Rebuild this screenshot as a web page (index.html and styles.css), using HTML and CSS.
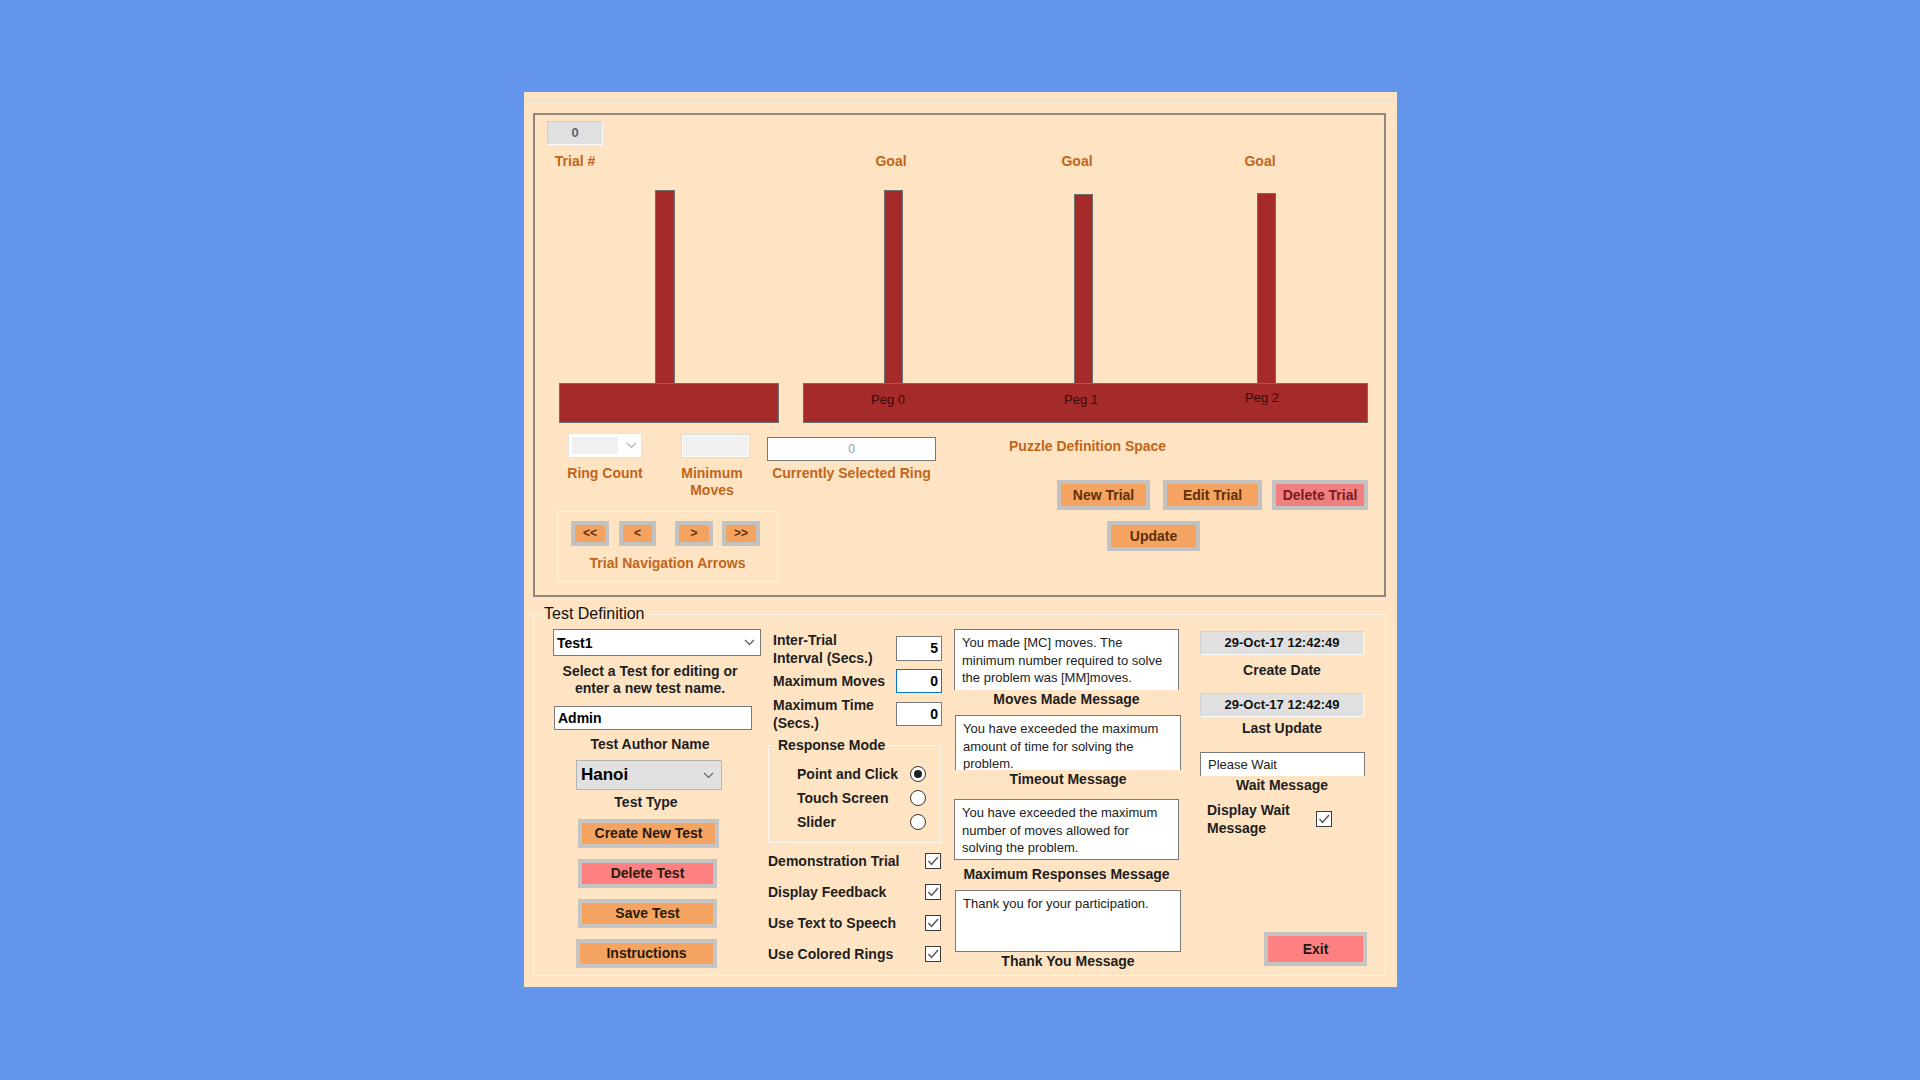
FILE: index.html
```html
<!DOCTYPE html>
<html>
<head>
<meta charset="utf-8">
<title>Test Definition</title>
<link rel="stylesheet" href="styles.css">
</head>
<body>
<div class="window">
  <div class="topline"></div>
  <div class="puzzle">
    <div class="trial-box">0</div>
    <div class="label-row">
      <span class="plabel first">Trial #</span>
      <span class="plabel g1">Goal</span>
      <span class="plabel g2">Goal</span>
      <span class="plabel g3">Goal</span>
    </div>
    <div class="stage">
      <div class="unit unit-left">
        <div class="poles"><div class="pole p0"></div></div>
        <div class="base"></div>
      </div>
      <div class="unit unit-right">
        <div class="poles"><div class="pole p1"></div><div class="pole p2"></div><div class="pole p3"></div></div>
        <div class="base base-right"><span class="peg l1">Peg 0</span><span class="peg l2">Peg 1</span><span class="peg l3">Peg 2</span></div>
      </div>
    </div>
    <div class="lower">
      <div class="lower-left">
        <div class="ctrl-row">
          <div class="ctrl ctrl-a">
            <div class="slot">
              <div class="combo-dis"><span class="dis-inner"></span><svg class="chev" width="11" height="7" viewBox="0 0 11 7"><polyline points="1,1 5.5,5.5 10,1" fill="none" stroke="#b4b4b4" stroke-width="1.2"/></svg></div>
            </div>
            <div class="clabel">Ring Count</div>
          </div>
          <div class="ctrl ctrl-b">
            <div class="slot"><div class="mini-box"></div></div>
            <div class="clabel">Minimum<br>Moves</div>
          </div>
          <div class="ctrl ctrl-c">
            <div class="slot"><div class="sel-box">0</div></div>
            <div class="clabel">Currently Selected Ring</div>
          </div>
        </div>
        <div class="navbox">
          <div class="navrow">
            <div class="navbtn n1">&lt;&lt;</div>
            <div class="navbtn n2">&lt;</div>
            <div class="navbtn n3">&gt;</div>
            <div class="navbtn n4">&gt;&gt;</div>
          </div>
          <div class="navlabel">Trial Navigation Arrows</div>
        </div>
      </div>
      <div class="lower-right">
        <div class="pds">Puzzle Definition Space</div>
        <div class="btnrow">
          <div class="btn b-new">New Trial</div>
          <div class="btn b-edit">Edit Trial</div>
          <div class="btn b-del">Delete Trial</div>
        </div>
        <div class="btn b-upd">Update</div>
      </div>
    </div>
  </div>

  <fieldset class="testdef">
    <legend class="td-legend">Test Definition</legend>
    <div class="td-body">
      <div class="col1">
        <div class="combo"><span>Test1</span><svg width="11" height="7" viewBox="0 0 11 7"><polyline points="1,1 5.5,5.5 10,1" fill="none" stroke="#555" stroke-width="1.2"/></svg></div>
        <div class="lab desc">Select a Test for editing or<br>enter a new test name.</div>
        <div class="admin">Admin</div>
        <div class="lab author-lab">Test Author Name</div>
        <div class="hanoi"><span>Hanoi</span><svg width="11" height="7" viewBox="0 0 11 7"><polyline points="1,1 5.5,5.5 10,1" fill="none" stroke="#666" stroke-width="1.2"/></svg></div>
        <div class="lab type-lab">Test Type</div>
        <div class="tbtn t-create">Create New Test</div>
        <div class="tbtn t-delete">Delete Test</div>
        <div class="tbtn t-save">Save Test</div>
        <div class="tbtn t-instr">Instructions</div>
      </div>

      <div class="col2">
        <div class="frow r1"><div class="flabel">Inter-Trial<br>Interval (Secs.)</div><div class="num">5</div></div>
        <div class="frow r2"><div class="flabel">Maximum Moves</div><div class="num focus">0</div></div>
        <div class="frow r3"><div class="flabel">Maximum Time<br>(Secs.)</div><div class="num">0</div></div>
        <fieldset class="resp">
          <legend class="resp-legend">Response Mode</legend>
          <div class="resp-body">
            <div class="radio-row"><span>Point and Click</span><span class="radio on"></span></div>
            <div class="radio-row"><span>Touch Screen</span><span class="radio"></span></div>
            <div class="radio-row"><span>Slider</span><span class="radio"></span></div>
          </div>
        </fieldset>
        <div class="chk-list">
          <div class="chk-row"><span>Demonstration Trial</span><span class="cb"><svg width="14" height="14" viewBox="0 0 14 14"><polyline points="2.5,7 5.5,10.5 12,3" fill="none" stroke="#555" stroke-width="1.4"/></svg></span></div>
          <div class="chk-row"><span>Display Feedback</span><span class="cb"><svg width="14" height="14" viewBox="0 0 14 14"><polyline points="2.5,7 5.5,10.5 12,3" fill="none" stroke="#555" stroke-width="1.4"/></svg></span></div>
          <div class="chk-row"><span>Use Text to Speech</span><span class="cb"><svg width="14" height="14" viewBox="0 0 14 14"><polyline points="2.5,7 5.5,10.5 12,3" fill="none" stroke="#555" stroke-width="1.4"/></svg></span></div>
          <div class="chk-row"><span>Use Colored Rings</span><span class="cb"><svg width="14" height="14" viewBox="0 0 14 14"><polyline points="2.5,7 5.5,10.5 12,3" fill="none" stroke="#555" stroke-width="1.4"/></svg></span></div>
        </div>
      </div>

      <div class="col3">
        <div class="msg m1 open">You made [MC] moves. The<br>minimum number required to solve<br>the problem was [MM]moves.</div>
        <div class="lab mlab l-moves">Moves Made Message</div>
        <div class="msg m2 open">You have exceeded the maximum<br>amount of time for solving the<br>problem.</div>
        <div class="lab mlab l-time">Timeout Message</div>
        <div class="msg m3">You have exceeded the maximum<br>number of moves allowed for<br>solving the problem.</div>
        <div class="lab mlab l-max">Maximum Responses Message</div>
        <div class="msg m4">Thank you for your participation.</div>
        <div class="lab mlab l-thanks">Thank You Message</div>
      </div>

      <div class="col4">
        <div class="date d1">29-Oct-17 12:42:49</div>
        <div class="lab dlab dl1">Create Date</div>
        <div class="date d2">29-Oct-17 12:42:49</div>
        <div class="lab dlab dl2">Last Update</div>
        <div class="waitbox">Please Wait</div>
        <div class="lab dlab dl3">Wait Message</div>
        <div class="waitrow">
          <div class="lab waitlab">Display Wait<br>Message</div>
          <span class="cb wcb"><svg width="14" height="14" viewBox="0 0 14 14"><polyline points="2.5,7 5.5,10.5 12,3" fill="none" stroke="#555" stroke-width="1.4"/></svg></span>
        </div>
        <div class="exit">Exit</div>
      </div>
    </div>
  </fieldset>
</div>
</body>
</html>
```

FILE: styles.css
```css
* { box-sizing: border-box; }

body {
  margin: 0;
  width: 1920px;
  height: 1080px;
  background: #6495ed;
  font-family: "Liberation Sans", Arial, sans-serif;
  overflow: hidden;
}

.window {
  margin: 92px 0 0 524px;
  width: 873px;
  height: 895px;
  background: #ffe4c4;
  display: flex;
  flex-direction: column;
}

.topline {
  margin-top: 8px;
  height: 0;
  border-top: 1px solid #e1ddd5;
}

/* ---------- puzzle area ---------- */
.puzzle {
  margin: 12px 0 0 9px;
  width: 853px;
  height: 484px;
  border: 2px solid #8d8780;
}

.trial-box {
  margin: 6px 0 0 12px;
  width: 56px;
  height: 24px;
  background: #e0e0e0;
  border: 1px solid;
  border-color: #cdcdcd #fbfbfb #fbfbfb #cdcdcd;
  font-weight: bold;
  font-size: 13px;
  line-height: 22px;
  text-align: center;
  color: #5f6372;
}

.label-row {
  display: flex;
  margin-top: 8px;
  height: 16px;
}

.plabel {
  width: 60px;
  text-align: center;
  font-weight: bold;
  font-size: 14px;
  line-height: 16px;
  color: #c0661a;
  white-space: nowrap;
}
.plabel.first { margin-left: 10px; }
.plabel.g1 { margin-left: 256px; }
.plabel.g2 { margin-left: 126px; }
.plabel.g3 { margin-left: 123px; }

.stage {
  display: flex;
  margin-top: 21px;
  padding-left: 24px;
}

.unit { display: flex; flex-direction: column; }
.unit-left { width: 220px; }
.unit-right { width: 565px; margin-left: 24px; }

.poles {
  display: flex;
  align-items: flex-end;
  height: 193px;
}

.pole {
  width: 20px;
  background: #a52a2a;
  border: 1px solid #6f6f6f;
  border-bottom: none;
}
.p0 { margin-left: 96px; height: 193px; }
.p1 { margin-left: 81px; height: 193px; width: 19px; }
.p2 { margin-left: 171px; height: 189px; width: 19px; }
.p3 { margin-left: 164px; height: 190px; width: 19px; }

.base {
  height: 40px;
  background: #a52a2a;
  border: 1px solid #6f6f6f;
}

.base-right {
  display: flex;
  padding-top: 8px;
}

.peg {
  width: 60px;
  text-align: center;
  font-size: 13px;
  line-height: 16px;
  color: #3a0c0c;
}
.l1 { margin-left: 54px; }
.l2 { margin-left: 133px; }
.l3 { margin-left: 121px; margin-top: -2px; }

.lower { display: flex; }
.lower-left { width: 402px; }

.ctrl-row { display: flex; align-items: flex-start; }

.ctrl {
  display: flex;
  flex-direction: column;
  align-items: center;
}
.ctrl-a { margin-left: 31px; width: 78px; }
.ctrl-b { margin-left: 28px; width: 80px; }
.ctrl-c { margin-left: 15px; width: 169px; }

.slot {
  height: 42px;
  width: 100%;
  display: flex;
  justify-content: center;
  align-items: flex-start;
}

.combo-dis {
  margin-top: 10px;
  width: 74px;
  height: 25px;
  background: #fff;
  border: 1px solid #e4e4e4;
  display: flex;
  align-items: center;
  padding: 0 4px 0 3px;
  justify-content: space-between;
}
.dis-inner {
  width: 46px;
  height: 17px;
  background: #f0f0f0;
}

.mini-box {
  margin: 11px 0 0 7px;
  width: 69px;
  height: 24px;
  background: #f0f0f0;
  border: 1px solid #dadada;
  box-shadow: inset 0 0 0 1px #fff;
}

.sel-box {
  margin-top: 14px;
  width: 169px;
  height: 24px;
  background: #fff;
  border: 1px solid #7a7a7a;
  font-size: 12px;
  line-height: 22px;
  text-align: center;
  color: #8f9aa6;
}

.clabel {
  font-weight: bold;
  font-size: 14px;
  line-height: 17px;
  color: #c0661a;
  text-align: center;
  white-space: nowrap;
}

.navbox {
  margin: 12px 0 0 22px;
  width: 221px;
  height: 71px;
  border: 1px solid #fbf2e8;
  display: flex;
  flex-direction: column;
  align-items: center;
  padding-top: 9px;
}

.navrow {
  display: flex;
  align-self: flex-start;
  padding-left: 13px;
}

.navbtn {
  height: 25px;
  width: 38px;
  border: 4px solid #c2c2c2;
  background: #f4a460;
  font-weight: bold;
  font-size: 12px;
  line-height: 17px;
  text-align: center;
  color: #5e300c;
}
.n2 { margin-left: 10px; width: 37px; }
.n3 { margin-left: 19px; }
.n4 { margin-left: 9px; }

.navlabel {
  margin-top: 9px;
  font-weight: bold;
  font-size: 14px;
  line-height: 17px;
  color: #c0661a;
  white-space: nowrap;
}

.lower-right {
  margin-left: 72px;
  display: flex;
  flex-direction: column;
}

.pds {
  margin-top: 15px;
  font-weight: bold;
  font-size: 14px;
  line-height: 17px;
  color: #c0661a;
  white-space: nowrap;
}

.btnrow {
  display: flex;
  margin: 25px 0 0 48px;
}

.btn {
  height: 30px;
  border: 4px solid #c2c2c2;
  background: #f4a460;
  font-weight: bold;
  font-size: 14px;
  line-height: 22px;
  text-align: center;
  color: #5e300c;
  white-space: nowrap;
}
.b-new { width: 93px; }
.b-edit { width: 99px; margin-left: 13px; }
.b-del { width: 96px; margin-left: 10px; background: #f08080; color: #7a1a22; }
.b-upd { width: 93px; margin: 11px 0 0 98px; }

/* ---------- test definition ---------- */
.testdef {
  margin: 8px 0 0 9px;
  width: 853px;
  height: 371px;
  border: 1px solid #fbf4ec;
  padding: 0;
  min-width: 0;
}

.td-legend {
  margin-left: 8px;
  padding: 0 2px;
  font-size: 16px;
  line-height: 18px;
  color: #111;
}

.td-body {
  display: flex;
  align-items: flex-start;
  padding: 6px 0 0 19px;
}

.lab {
  font-weight: bold;
  font-size: 14px;
  line-height: 17px;
  color: #1e1e1e;
  text-align: center;
  white-space: nowrap;
}

.col1 {
  width: 208px;
  display: flex;
  flex-direction: column;
}

.combo {
  width: 208px;
  height: 27px;
  background: #fff;
  border: 1px solid #7a7a7a;
  display: flex;
  align-items: center;
  justify-content: space-between;
  padding: 0 5px 0 3px;
  font-weight: bold;
  font-size: 14px;
  color: #000;
}

.desc { width: 194px; margin-top: 7px; }

.admin {
  margin: 9px 0 0 1px;
  width: 198px;
  height: 24px;
  background: #fff;
  border: 1px solid #7a7a7a;
  padding-left: 3px;
  font-weight: bold;
  font-size: 14px;
  line-height: 22px;
  color: #000;
}

.author-lab { width: 194px; margin-top: 6px; }

.hanoi {
  margin: 7px 0 0 23px;
  width: 146px;
  height: 30px;
  background: #e1e1e1;
  border: 1px solid #b4b4b4;
  display: flex;
  align-items: center;
  justify-content: space-between;
  padding: 0 7px 0 4px;
  font-weight: bold;
  font-size: 17px;
  color: #000;
}

.type-lab { width: 186px; margin-top: 4px; }

.tbtn {
  width: 141px;
  height: 29px;
  margin-left: 25px;
  border: 4px solid #c4c4c4;
  background: #f4a460;
  font-weight: bold;
  font-size: 14px;
  line-height: 21px;
  text-align: center;
  color: #2a1a0e;
}
.t-create { margin-top: 8px; }
.t-delete { margin-top: 11px; width: 139px; background: #ff8080; }
.t-save { margin-top: 11px; width: 139px; }
.t-instr { margin-top: 11px; margin-left: 23px; }

.col2 {
  margin-left: 7px;
  width: 174px;
  display: flex;
  flex-direction: column;
}

.frow {
  display: flex;
  justify-content: space-between;
  align-items: flex-start;
}

.flabel {
  margin-left: 5px;
  font-weight: bold;
  font-size: 14px;
  line-height: 18px;
  color: #1e1e1e;
  white-space: nowrap;
}

.num {
  width: 46px;
  height: 25px;
  background: #fff;
  border: 1px solid #7a7a7a;
  text-align: right;
  padding-right: 3px;
  font-weight: bold;
  font-size: 14px;
  line-height: 23px;
  color: #000;
}
.num.focus { border-color: #0078d7; }

.r1 .flabel { margin-top: 2px; }
.r1 .num { margin-top: 7px; }
.r2 .flabel { margin-top: 5px; }
.r2 .num { margin-top: 2px; height: 24px; line-height: 22px; }
.r3 .flabel { margin-top: 3px; }
.r3 .num { margin-top: 9px; height: 24px; line-height: 22px; }

.resp {
  margin: 5px 0 0 0;
  width: 173px;
  border: 1px solid #fbf6f1;
  padding: 9px 0 8px 0;
  min-width: 0;
}

.resp-legend {
  margin-left: 7px;
  padding: 0 2px;
  font-weight: bold;
  font-size: 14px;
  line-height: 16px;
  color: #1e1e1e;
}

.resp-body {
  padding: 0 14px 0 28px;
}

.radio-row {
  display: flex;
  justify-content: space-between;
  align-items: center;
  height: 24px;
  font-weight: bold;
  font-size: 14px;
  color: #1e1e1e;
}

.radio {
  width: 16px;
  height: 16px;
  border-radius: 50%;
  border: 1px solid #333;
  background: #fff;
  display: flex;
  align-items: center;
  justify-content: center;
}
.radio.on::after {
  content: "";
  width: 8px;
  height: 8px;
  border-radius: 50%;
  background: #222;
}

.chk-list {
  margin-top: 2px;
  width: 173px;
}

.chk-row {
  display: flex;
  justify-content: space-between;
  align-items: center;
  height: 31px;
  font-weight: bold;
  font-size: 14px;
  color: #1e1e1e;
  white-space: nowrap;
}

.cb {
  width: 16px;
  height: 16px;
  border: 1px solid #3a3a3a;
  background: #fff;
  display: flex;
  align-items: center;
  justify-content: center;
}

.col3 {
  margin-left: 12px;
  width: 227px;
  display: flex;
  flex-direction: column;
}

.msg {
  background: #fff;
  border: 1px solid #7a7a7a;
  padding: 4px 6px 0 7px;
  font-size: 13px;
  line-height: 17.5px;
  color: #222;
  white-space: nowrap;
  overflow: hidden;
}
.msg.open { border-bottom: none; }
.m1 { width: 225px; height: 61px; }
.m2 { width: 226px; height: 55px; margin: 7px 0 0 1px; }
.m3 { width: 225px; height: 61px; margin-top: 11px; }
.m4 { width: 226px; height: 62px; margin: 7px 0 0 1px; }

.mlab { line-height: 18px; }
.l-moves { width: 225px; }
.l-time { width: 226px; margin-left: 1px; }
.l-max { width: 225px; margin-top: 5px; }
.l-thanks { width: 226px; margin-left: 1px; }

.col4 {
  margin-left: 19px;
  width: 168px;
  display: flex;
  flex-direction: column;
}

.date {
  width: 164px;
  height: 24px;
  background: #e0e0e0;
  border: 1px solid;
  border-color: #d2d2d2 #fbfbfb #fbfbfb #d2d2d2;
  font-weight: bold;
  font-size: 13px;
  line-height: 22px;
  text-align: center;
  color: #111;
}
.d1 { margin-top: 2px; }
.d2 { margin-top: 14px; }

.dlab { width: 164px; line-height: 18px; }
.dl1 { margin-top: 6px; }
.dl2 { margin-top: 2px; }

.waitbox {
  margin-top: 15px;
  width: 165px;
  height: 24px;
  background: #fff;
  border: 1px solid #7a7a7a;
  border-bottom: none;
  padding: 1px 0 0 7px;
  font-size: 13px;
  line-height: 22px;
  color: #222;
}

.waitrow {
  display: flex;
  align-items: flex-start;
  margin-top: 7px;
}

.waitlab {
  margin-left: 7px;
  width: 100px;
  text-align: left;
  line-height: 18px;
}

.wcb { margin: 10px 0 0 9px; }

.exit {
  margin: 95px 0 0 64px;
  width: 103px;
  height: 34px;
  border: 4px solid #c4c4c4;
  background: #ff8080;
  font-weight: bold;
  font-size: 14px;
  line-height: 26px;
  text-align: center;
  color: #1a1a1a;
}
```
